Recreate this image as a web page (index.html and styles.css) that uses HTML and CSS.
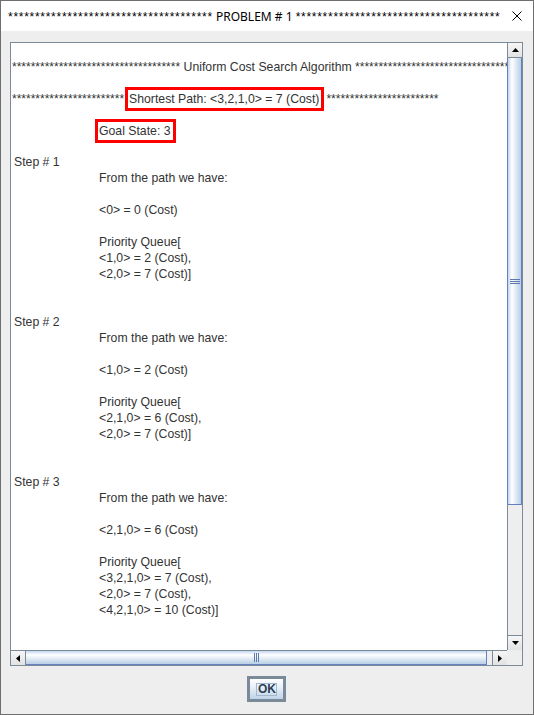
FILE: index.html
```html
<!DOCTYPE html>
<html>
<head>
<meta charset="utf-8">
<title>PROBLEM # 1</title>
<link rel="stylesheet" href="styles.css">
</head>
<body>
<div class="window">
  <div class="titlebar">
    <div class="title"><span class="tstars">**************************************</span> PROBLEM # 1 <span class="tstars">**************************************</span></div>
    <div class="close"><svg width="10" height="10" viewBox="0 0 10 10"><path d="M0.5 0.5L9.5 9.5M9.5 0.5L0.5 9.5" stroke="#000" stroke-width="1" fill="none"/></svg></div>
  </div>
  <div class="client">
    <div class="scrollpane">
      <div class="viewport">
        <div class="doc">
          <div class="line"></div>
          <div class="line"><span class="stars">************************************</span> Uniform Cost Search Algorithm <span class="stars">****************************************</span></div>
          <div class="line"></div>
          <div class="line"><span class="stars">************************</span><span class="box">Shortest Path: &lt;3,2,1,0&gt; = 7 (Cost)</span><span class="stars">************************</span></div>
          <div class="line"></div>
          <div class="line"><span class="box goal">Goal State: 3</span></div>
          <div class="line short"></div>

          <div class="step">
            <div class="line label">Step # 1</div>
            <div class="body">
              <div class="line">From the path we have:</div>
              <div class="line"></div>
              <div class="line">&lt;0&gt; = 0 (Cost)</div>
              <div class="line"></div>
              <div class="line">Priority Queue[</div>
              <div class="line">&lt;1,0&gt; = 2 (Cost),</div>
              <div class="line">&lt;2,0&gt; = 7 (Cost)]</div>
              <div class="line"></div>
              <div class="line"></div>
            </div>
          </div>

          <div class="step">
            <div class="line label">Step # 2</div>
            <div class="body">
              <div class="line">From the path we have:</div>
              <div class="line"></div>
              <div class="line">&lt;1,0&gt; = 2 (Cost)</div>
              <div class="line"></div>
              <div class="line">Priority Queue[</div>
              <div class="line">&lt;2,1,0&gt; = 6 (Cost),</div>
              <div class="line">&lt;2,0&gt; = 7 (Cost)]</div>
              <div class="line"></div>
              <div class="line"></div>
            </div>
          </div>

          <div class="step">
            <div class="line label">Step # 3</div>
            <div class="body">
              <div class="line">From the path we have:</div>
              <div class="line"></div>
              <div class="line">&lt;2,1,0&gt; = 6 (Cost)</div>
              <div class="line"></div>
              <div class="line">Priority Queue[</div>
              <div class="line">&lt;3,2,1,0&gt; = 7 (Cost),</div>
              <div class="line">&lt;2,0&gt; = 7 (Cost),</div>
              <div class="line">&lt;4,2,1,0&gt; = 10 (Cost)]</div>
              <div class="line"></div>
              <div class="line"></div>
            </div>
          </div>
        </div>
      </div>

      <div class="vscroll">
        <div class="arrow-btn up"><svg width="7" height="4" viewBox="0 0 7 4"><path d="M3.5 0L7 4H0Z" fill="#000"/></svg></div>
        <div class="vthumb"><svg width="10" height="5" viewBox="0 0 10 5"><path d="M0 0.5H10M0 2.5H10M0 4.5H10" stroke="#5d78ad" stroke-width="1"/></svg></div>
        <div class="vtrack"></div>
        <div class="arrow-btn down"><svg width="7" height="4" viewBox="0 0 7 4"><path d="M0 0H7L3.5 4Z" fill="#000"/></svg></div>
      </div>

      <div class="hscroll">
        <div class="arrow-btn left"><svg width="4" height="7" viewBox="0 0 4 7"><path d="M4 0V7L0 3.5Z" fill="#000"/></svg></div>
        <div class="hthumb"><svg width="5" height="9" viewBox="0 0 5 9"><path d="M0.5 0V9M2.5 0V9M4.5 0V9" stroke="#5d78ad" stroke-width="1"/></svg></div>
        <div class="htrack"></div>
        <div class="arrow-btn right"><svg width="4" height="7" viewBox="0 0 4 7"><path d="M0 0V7L4 3.5Z" fill="#000"/></svg></div>
      </div>

      <div class="corner"></div>
    </div>

    <div class="buttons">
      <div class="ok"><span class="ok-focus">OK</span></div>
    </div>
  </div>
</div>
</body>
</html>
```

FILE: styles.css
```css
html, body {
  margin: 0;
  padding: 0;
  background: #eeeeee;
}

.window {
  width: 534px;
  height: 715px;
  box-sizing: border-box;
  border: 1px solid #6e6e6e;
  display: flex;
  flex-direction: column;
  background: #eeeeee;
  overflow: hidden;
}

.titlebar {
  height: 30px;
  flex: 0 0 30px;
  background: #ffffff;
  display: flex;
  align-items: center;
  justify-content: space-between;
}

.title {
  padding-left: 7px;
  font-family: "Noto Sans", "Open Sans", sans-serif;
  font-size: 12px;
  color: #000000;
  white-space: nowrap;
}

.tstars {
  font-family: "Liberation Sans", Arial, sans-serif;
  font-size: 12px;
  letter-spacing: 0.72px;
}

.close {
  display: flex;
  align-items: center;
  padding-right: 11px;
}

.client {
  flex: 1;
  padding: 11px 10px 0 9px;
  display: flex;
  flex-direction: column;
}

.scrollpane {
  height: 624px;
  box-sizing: border-box;
  border: 1px solid #7a8a99;
  display: grid;
  grid-template-columns: 496px 15px;
  grid-template-rows: 607px 15px;
  background: #ffffff;
}

.viewport {
  overflow: hidden;
  background: #ffffff;
}

.doc {
  padding: 0 0 0 1px;
  font-family: "Liberation Sans", Arial, sans-serif;
  font-size: 12.25px;
  line-height: 16px;
  color: #333333;
  white-space: nowrap;
}

.stars {
  font-size: 12px;
}

.line {
  height: 16px;
}

.line.short {
  height: 15px;
}

.box {
  display: inline-block;
  border: 3px solid #ff0000;
  padding: 1px 2px 1px 1px;
  margin: -4px 2px -4px 1px;
  line-height: 16px;
}

.box.goal {
  margin-left: 83px;
}

.label {
  padding-left: 2px;
}

.body {
  padding-left: 87px;
}

.vscroll {
  display: flex;
  flex-direction: column;
  background: #eeeeee;
}

.arrow-btn {
  box-sizing: border-box;
  width: 15px;
  height: 15px;
  flex: 0 0 15px;
  display: flex;
  align-items: center;
  justify-content: center;
  background: linear-gradient(#f6f6f6, #e2e2e2);
  border: 0 solid #7a8a99;
}

.arrow-btn.up {
  border-left-width: 1px;
  border-bottom-width: 1px;
}

.arrow-btn.down {
  border-left-width: 1px;
  border-top-width: 1px;
}

.arrow-btn.left,
.arrow-btn.right {
  border-left-width: 1px;
  width: 15px;
  height: 14px;
  flex: 0 0 15px;
}

.arrow-btn.left {
  border-left-width: 0;
  border-right-width: 1px;
}

.vthumb {
  box-sizing: border-box;
  height: 447px;
  flex: 0 0 447px;
  border: 1px solid #6382bf;
  border-top-width: 0;
  background: linear-gradient(to right, #c3d6ef 0%, #ffffff 30%, #b8cfe5 100%);
  display: flex;
  align-items: center;
  justify-content: center;
}

.vtrack {
  flex: 1;
  border-left: 1px solid #7a8a99;
  background: #eeeeee;
}

.hscroll {
  display: flex;
  box-sizing: border-box;
  border-top: 1px solid #7a8a99;
  background: #eeeeee;
}

.hthumb {
  box-sizing: border-box;
  width: 461px;
  flex: 0 0 461px;
  border: 1px solid #6382bf;
  border-left-width: 0;
  border-top-width: 0;
  background: linear-gradient(to bottom, #c3d6ef 0%, #ffffff 30%, #b8cfe5 100%);
  display: flex;
  align-items: center;
  justify-content: center;
}

.htrack {
  flex: 1;
  background: #eeeeee;
}

.corner {
  background: #eeeeee;
}

.buttons {
  margin-top: 10px;
  display: flex;
  justify-content: center;
}

.ok {
  box-sizing: border-box;
  width: 39px;
  height: 26px;
  border: 3px solid #7a8a99;
  background: linear-gradient(to bottom, #ffffff 0%, #e6eef7 45%, #bfd3e8 100%);
  display: flex;
  align-items: center;
  justify-content: center;
}

.ok-focus {
  font-family: "Liberation Sans", Arial, sans-serif;
  font-weight: bold;
  font-size: 12px;
  line-height: 11px;
  color: #2c3e55;
  border: 1px solid #a3b8cc;
  padding: 0 0 0 1px;
}
```
